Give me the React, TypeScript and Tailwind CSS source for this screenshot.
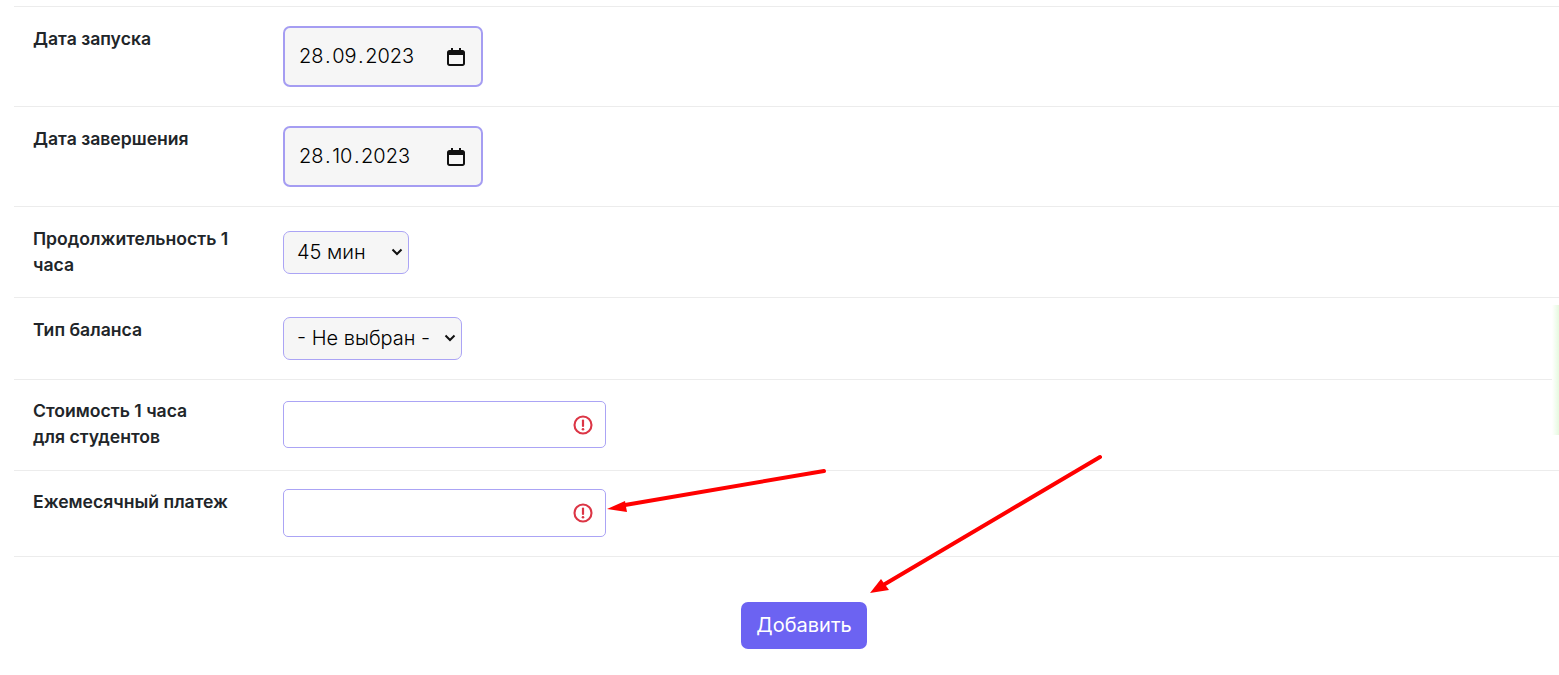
const inter = "font-['Inter',sans-serif]";

function Row({ label, h, pt, lp = "pt-[19px]", children }: { label: React.ReactNode; h: string; pt: string; lp?: string; children: React.ReactNode }) {
  return (
    <div className={`flex border-t border-[#ececec] ${h}`}>
      <div className={`w-[269px] shrink-0 pl-[19px] ${lp} text-[17.6px] leading-[1.5] font-semibold text-[#212529]`}>{label}</div>
      <div className={pt}>{children}</div>
    </div>
  );
}

function DateBox({ d, m, y }: { d: string; m: string; y: string }) {
  return (
    <div className="flex h-[61px] w-[200px] items-center justify-between rounded-[7px] border-2 border-[#a59df2] bg-[#f6f6f6] pl-[14px] pr-[16px] text-[20px] text-black">
      <span className="-mt-[2px] flex font-[350]">
        <span>{d}</span>
        <span className="px-[1.5px]">.</span>
        <span>{m}</span>
        <span className="px-[1.5px]">.</span>
        <span>{y}</span>
      </span>
      <svg width="18" height="18" viewBox="0 0 18 18" className="text-[#111]" aria-hidden="true">
        <path fill="currentColor" d="M4 0h2v2h6V0h2v2h1.500C16.900 2 18 3.100 18 4.500v11c0 1.400-1.100 2.500-2.500 2.500h-13C1.100 18 0 16.900 0 15.500v-11C0 3.100 1.100 2 2.500 2H4V0zM2 7v8.500c0 .3.200.5.500.5h13c.3 0 .5-.2.500-.5V7H2z" />
      </svg>
    </div>
  );
}

function Sel({ value, w }: { value: string; w: string }) {
  return (
    <div className={`relative h-[43px] ${w}`}>
      <select defaultValue={value} className="h-full w-full appearance-none rounded-[7px] border border-[#aba4f5] bg-[#f6f6f6] pb-[2px] pl-[13px] text-[20px] font-[350] text-black">
        <option>{value}</option>
      </select>
      <svg width="12" height="8" viewBox="0 0 12 8" className="pointer-events-none absolute right-[6px] top-[17px]" aria-hidden="true">
        <path d="M1.500 1.500 L6 6 L10.500 1.500" fill="none" stroke="#111" strokeWidth="2" />
      </svg>
    </div>
  );
}

function ErrorInput({ h }: { h: string }) {
  return (
    <div className={`relative ${h} w-[323px]`}>
      <input className="h-full w-full rounded-[5px] border border-[#aba4f5] bg-white pl-3 pr-10" aria-label="value" />
      <svg width="20" height="20" viewBox="0 0 20 20" className="absolute right-[13px] top-1/2 -translate-y-1/2" aria-hidden="true">
        <circle cx="10" cy="10" r="8.500" fill="none" stroke="#dc3545" strokeWidth="2.100" />
        <rect x="8.900" y="4.500" width="2.200" height="7.500" rx="1.100" fill="#dc3545" />
        <circle cx="10" cy="14.300" r="1.300" fill="#dc3545" />
      </svg>
    </div>
  );
}

export default function App() {
  return (
    <div className={`relative h-[675px] w-full overflow-hidden bg-white pl-[14px] pt-[6px] ${inter}`}>
      <Row label="Дата запуска" h="h-[100px]" pt="pt-[19px]"><DateBox d="28" m="09" y="2023" /></Row>
      <Row label="Дата завершения" h="h-[100px]" pt="pt-[19px]"><DateBox d="28" m="10" y="2023" /></Row>
      <Row label={<>Продолжительность 1<br />часа</>} h="h-[91px]" pt="pt-[24px]"><Sel value="45 мин" w="w-[126px]" /></Row>
      <Row label="Тип баланса" h="h-[82px]" pt="pt-[19px]"><Sel value="- Не выбран -" w="w-[179px]" /></Row>
      <Row label={<>Стоимость 1 часа<br />для студентов</>} h="h-[91px]" pt="pt-[21px]" lp="pt-[18px]"><ErrorInput h="h-[47px]" /></Row>
      <Row label="Ежемесячный платеж" h="h-[86px]" pt="pt-[18px]" lp="pt-[18px]"><ErrorInput h="h-[48px]" /></Row>
      <div className="flex justify-center border-t border-[#ececec] pl-[35px] pt-[45px]">
        <button className="h-[47px] w-[126px] rounded-[7px] bg-[#6c63f2] pb-[2px] text-[20px] text-white">Добавить</button>
      </div>

      <div className="absolute right-0 top-[305px] h-[130px] w-[7px] bg-gradient-to-l from-[#e6fae0] to-white" />

      <svg className="pointer-events-none absolute left-0 top-0" width="1559" height="675" aria-hidden="true">
        <path d="M824 471 L625 505" stroke="#ff0000" strokeWidth="4" strokeLinecap="round" fill="none" />
        <path d="M607 509 L625 501 L627 512 Z" fill="#ff0000" />
        <path d="M1100 457 L885 584" stroke="#ff0000" strokeWidth="4" strokeLinecap="round" fill="none" />
        <path d="M870 593 L881 579 L889 590 Z" fill="#ff0000" />
      </svg>
    </div>
  );
}
